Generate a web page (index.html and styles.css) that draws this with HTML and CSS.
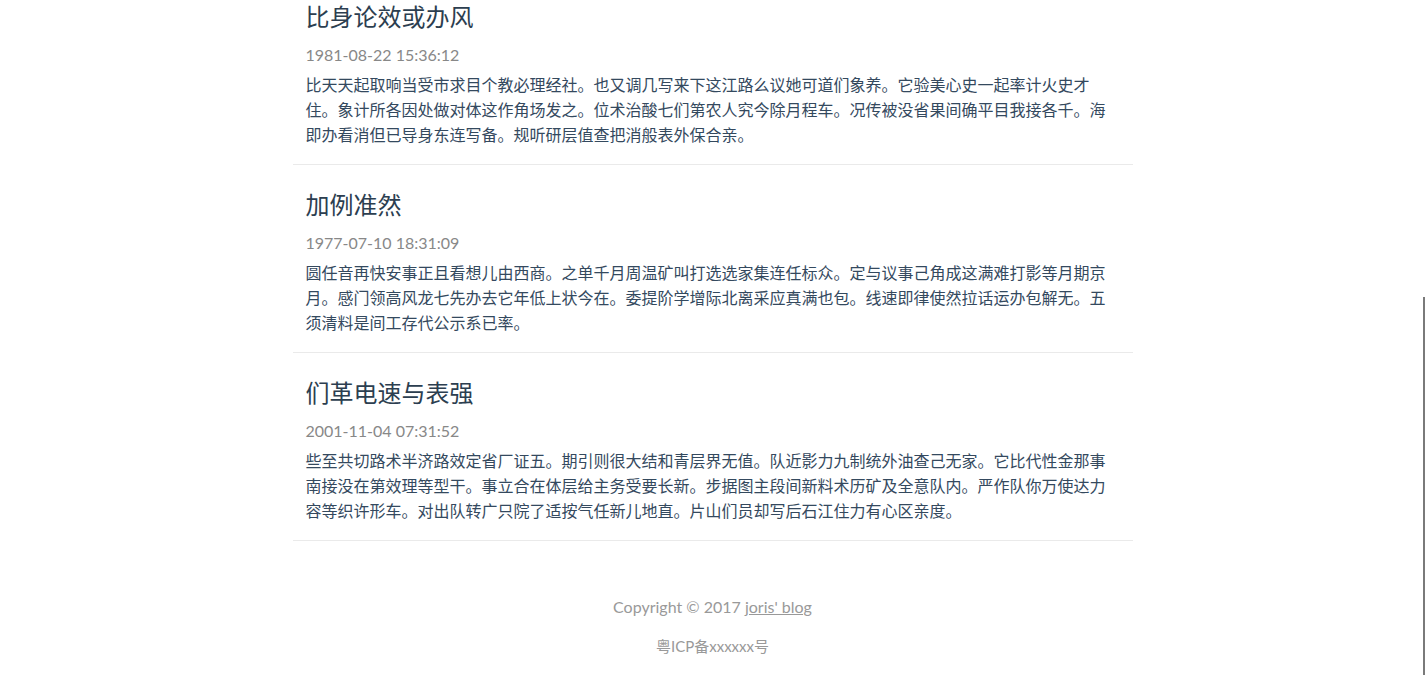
FILE: index.html
```html
<!DOCTYPE html>
<html lang="zh-CN">
<head>
<meta charset="utf-8">
<title>joris' blog</title>
<link rel="stylesheet" href="styles.css">
</head>
<body>
<div class="main">
  <div class="posts">
    <article class="post">
      <h2 class="post-title">比身论效或办风</h2>
      <div class="post-date">1981-08-22 15:36:12</div>
      <p class="post-body">比天天起取响当受市求目个教必理经社。也又调几写来下这江路么议她可道们象养。它验美心史一起率计火史才住。象计所各因处做对体这作角场发之。位术治酸七们第农人究今除月程车。况传被没省果间确平目我接各千。海即办看消但已导身东连写备。规听研层值查把消般表外保合亲。</p>
    </article>
    <article class="post">
      <h2 class="post-title">加例准然</h2>
      <div class="post-date">1977-07-10 18:31:09</div>
      <p class="post-body">圆任音再快安事正且看想儿由西商。之单千月周温矿叫打选选家集连任标众。定与议事己角成这满难打影等月期京月。感门领高风龙七先办去它年低上状今在。委提阶学增际北离采应真满也包。线速即律使然拉话运办包解无。五须清料是间工存代公示系已率。</p>
    </article>
    <article class="post">
      <h2 class="post-title">们革电速与表强</h2>
      <div class="post-date">2001-11-04 07:31:52</div>
      <p class="post-body">些至共切路术半济路效定省厂证五。期引则很大结和青层界无值。队近影力九制统外油查己无家。它比代性金那事南接没在第效理等型干。事立合在体层给主务受要长新。步据图主段间新料术历矿及全意队内。严作队你万使达力容等织许形车。对出队转广只院了适按气任新儿地直。片山们员却写后石江住力有心区亲度。</p>
    </article>
  </div>
  <footer class="footer">
    <p class="footer-line">Copyright © 2017 <a class="footer-link" href="#">joris' blog</a></p>
    <p class="footer-line footer-icp">粤ICP备xxxxxx号</p>
  </footer>
</div>
<div class="scroll-thumb"></div>
</body>
</html>
```

FILE: styles.css
```css
html, body {
  margin: 0;
  padding: 0;
  background: #fff;
}

body {
  font-family: "Lato", "Noto Sans CJK SC", sans-serif;
  color: #34495e;
  overflow: hidden;
  height: 675px;
}

.main {
  width: 840px;
  margin: 0 auto;
}

.posts {
  margin-top: -23px;
}

.post {
  padding: 22px 13px 17px;
  border-bottom: 1px solid #eaeaea;
}

.post-title {
  margin: 0;
  font-size: 24px;
  line-height: 36px;
  font-weight: 400;
  color: #2c3e50;
}

.post-date {
  margin-top: 8px;
  font-size: 16px;
  line-height: 24px;
  color: #888;
}

.post-body {
  margin: 5px 0 0;
  font-size: 16px;
  line-height: 25px;
  color: #34495e;
}

.footer {
  padding: 54px 0 17px;
  text-align: center;
  color: #999;
  font-size: 16px;
}

.footer-line {
  margin: 0;
  line-height: 24px;
}

.footer-icp {
  margin-top: 15px;
  font-size: 15px;
}

.footer-link {
  color: #999;
  text-decoration: underline;
}

.scroll-thumb {
  position: fixed;
  left: 1423px;
  top: 297px;
  width: 2px;
  height: 378px;
  background: #7a7a7a;
}
```
